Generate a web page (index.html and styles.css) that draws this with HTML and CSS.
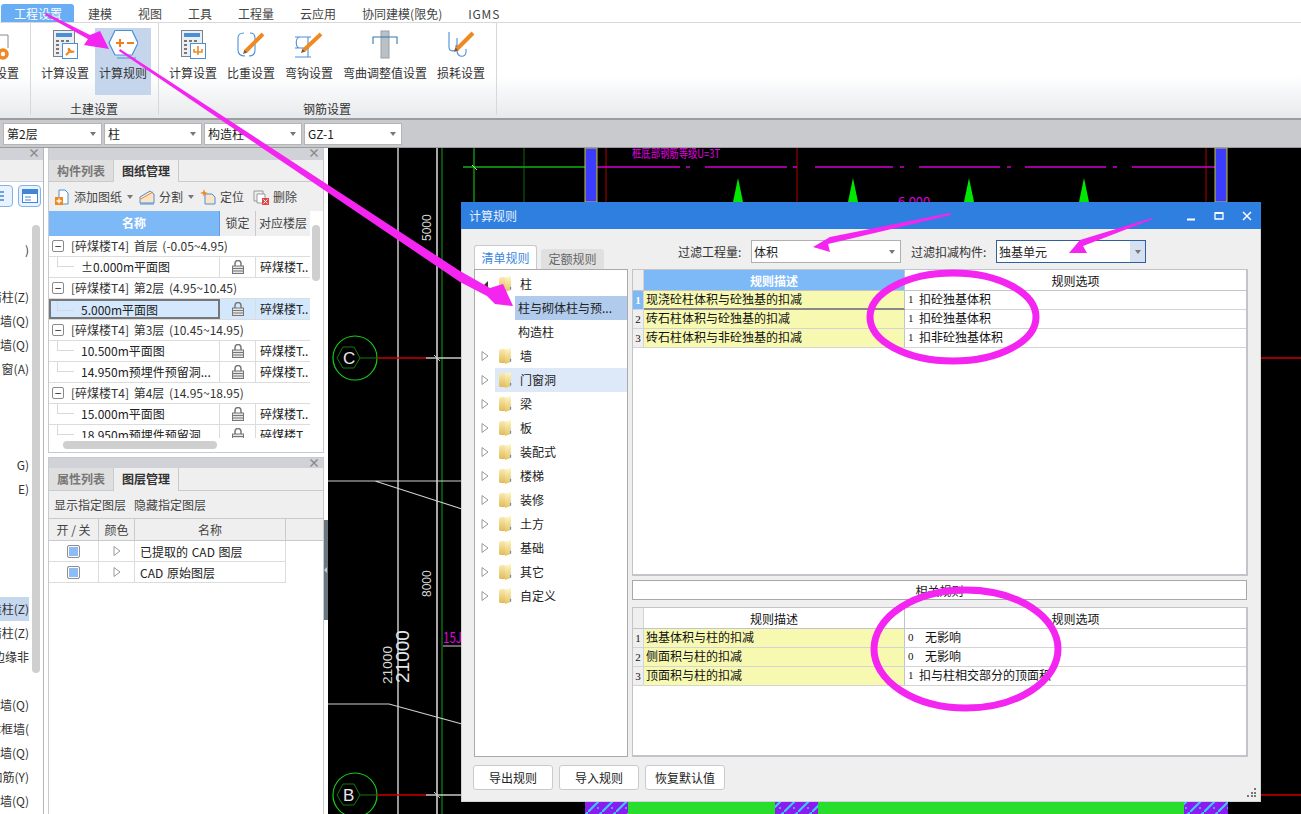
FILE: index.html
```html
<!DOCTYPE html>
<html lang="zh-CN">
<head>
<meta charset="utf-8">
<title>计算规则</title>
<link rel="stylesheet" href="styles.css">
</head>
<body>
<svg class="defs" width="0" height="0" aria-hidden="true">
  <defs>
    <linearGradient id="fold" x1="0" y1="0" x2="0" y2="1"><stop offset="0" stop-color="#fdf7c8"/><stop offset="1" stop-color="#e6c262"/></linearGradient>
    <linearGradient id="fold2" x1="0" y1="0" x2="0" y2="1"><stop offset="0" stop-color="#f9eaac"/><stop offset="1" stop-color="#e2bb5c"/></linearGradient>
    <pattern id="hatch" width="14" height="14" patternUnits="userSpaceOnUse"><rect width="14" height="14" fill="#8a1cf0"/><path d="M0 14L14 0" stroke="#35d0ff" stroke-width="2"/><circle cx="10" cy="10" r="1" fill="#35d0ff"/></pattern>
    <symbol id="calc" viewBox="0 0 30 30">
      <rect x="3.500" y=".5" width="21" height="26" fill="#eceff2" stroke="#7d8288"/>
      <rect x="6" y="3" width="16" height="4" fill="#4a90d9"/>
      <path d="M6 10h3v2H6zM11 10h3v2h-3zM16 10h3v2h-3zM6 14h3v2H6zM6 18h3v2H6zM6 22h3v2H6z" fill="#777"/>
      <rect x="12.500" y="13.500" width="15" height="15" fill="#fff" stroke="#4a90d9"/>
    </symbol>
    <symbol id="lock" viewBox="0 0 12 14">
      <path d="M3 6V3.500a3 3 0 0 1 6 0V6" fill="none" stroke="#777" stroke-width="1.500"/>
      <rect x=".5" y="6" width="11" height="7.500" fill="#e4e4e4" stroke="#777"/>
      <path d="M1 8.500h10M1 11h10" stroke="#777"/>
    </symbol>
    <symbol id="folder" viewBox="0 0 13 16">
      <path d="M0 2.500 1.500 1h4l1 1.500V15H1l-1-1z" fill="url(#fold2)"/>
      <path d="M6 1.500 12 0v14l-6 2z" fill="url(#fold)"/>
      <rect x="11" y="11" width="1.200" height="2.500" fill="#4a90d9"/>
    </symbol>
    <symbol id="tri" viewBox="0 0 8 12"><path d="M1 1.500 7 6 1 10.500z" fill="#fff" stroke="#9a9a9a"/></symbol>
  </defs>
</svg>

<header class="menubar">
  <span class="menu-item is-active">工程设置</span>
  <span class="menu-item">建模</span>
  <span class="menu-item">视图</span>
  <span class="menu-item">工具</span>
  <span class="menu-item">工程量</span>
  <span class="menu-item">云应用</span>
  <span class="menu-item">协同建模(限免)</span>
  <span class="menu-item igms">IGMS</span>
</header>

<section class="ribbon">
  <div class="rib-group rib-first">
    <div class="rib-items">
      <div class="rib-item rib-cut">
        <svg class="rib-icon" viewBox="0 0 30 30"><path d="M20 5h8v13" fill="none" stroke="#8a8a8a"/><circle cx="23" cy="24" r="4" fill="none" stroke="#ef8a22" stroke-width="3.500"/></svg>
        <span class="rib-text">属性设置</span>
      </div>
    </div>
    <div class="rib-label">&nbsp;</div>
  </div>
  <div class="rib-group">
    <div class="rib-items">
      <div class="rib-item">
        <svg class="rib-icon" viewBox="0 0 30 30"><use href="#calc"/><path d="M16 25l5-5" stroke="#ef8a22" stroke-width="2.200"/><path d="M19 18a3 3 0 0 0 5 3" fill="none" stroke="#ef8a22" stroke-width="2.200"/></svg>
        <span class="rib-text">计算设置</span>
      </div>
      <div class="rib-item is-on">
        <svg class="rib-icon" viewBox="0 0 30 30"><path d="M1 13 7 .5h17L30 13l-6 12H7z" fill="#fff" stroke="#4a90d9" stroke-width="1.200"/><path d="M8 13h8M12 9v8M19 13h7" stroke="#ef7f1a" stroke-width="2"/><path d="M9 28h19" stroke="#4a90d9"/></svg>
        <span class="rib-text">计算规则</span>
      </div>
    </div>
    <div class="rib-label">土建设置</div>
  </div>
  <div class="rib-group">
    <div class="rib-items">
      <div class="rib-item">
        <svg class="rib-icon" viewBox="0 0 30 30"><use href="#calc"/><path d="M20 16v9M16 19v3h8v-3" stroke="#ef8a22" stroke-width="1.600" fill="none"/></svg>
        <span class="rib-text">计算设置</span>
      </div>
      <div class="rib-item">
        <svg class="rib-icon" viewBox="0 0 30 30"><path d="M8 3C4 3 2 5 2 8v12c0 4 3 6 7 6M14 3c3 0 5 2 5 5v12c0 4-2 6-6 6" fill="none" stroke="#4a90d9" stroke-width="1.100"/><path d="M10 21 27 4" stroke="#ef8a22" stroke-width="4"/><path d="M7 24l1.500-4.500 3 3z" fill="#8a5a2a"/></svg>
        <span class="rib-text">比重设置</span>
      </div>
      <div class="rib-item">
        <svg class="rib-icon" viewBox="0 0 30 30"><path d="M1 7h16M6 7C1 7 1 18 6 18M1 18h14M1 27h16M14 7v20" fill="none" stroke="#4a90d9" stroke-width="1.100"/><path d="M10 20 27 4" stroke="#ef8a22" stroke-width="4"/><path d="M7 23l1.500-4.500 3 3z" fill="#8a5a2a"/></svg>
        <span class="rib-text">弯钩设置</span>
      </div>
      <div class="rib-item">
        <svg class="rib-icon" viewBox="0 0 30 30"><rect x="11" y="1" width="8" height="27" fill="#b9c0c6" stroke="#9aa1a8"/><path d="M3 14V7h24v7" fill="none" stroke="#2f78b8" stroke-width="1.100"/></svg>
        <span class="rib-text">弯曲调整值设置</span>
      </div>
      <div class="rib-item">
        <svg class="rib-icon" viewBox="0 0 30 30"><path d="M3 2v15c0 5 7 5 7 1v-3M11 8v12c0 8 9 8 9 2v-3" fill="none" stroke="#4a90d9" stroke-width="1.100"/><path d="M11 19 27 3" stroke="#ef8a22" stroke-width="4"/><path d="M8 22l1.500-4.500 3 3z" fill="#8a5a2a"/></svg>
        <span class="rib-text">损耗设置</span>
      </div>
    </div>
    <div class="rib-label">钢筋设置</div>
  </div>
</section>

<nav class="selectbar">
  <div class="select w99"><span>第2层</span><i class="caret"></i></div>
  <div class="select"><span>柱</span><i class="caret"></i></div>
  <div class="select"><span>构造柱</span><i class="caret"></i></div>
  <div class="select"><span>GZ-1</span><i class="caret"></i></div>
</nav>

<main class="workspace">
  <aside class="side-a">
    <div class="pane-head"><span class="pane-x">×</span></div>
    <div class="side-a-tabs"></div>
    <div class="side-a-tools">
      <span class="mini-btn"><svg width="14" height="14" viewBox="0 0 14 14"><path d="M0 3h9M0 7h9M0 11h9" stroke="#3f86d8" stroke-width="1.300"/></svg></span>
      <span class="mini-btn mini-btn-b"><svg width="16" height="14" viewBox="0 0 16 14"><rect x=".5" y=".5" width="15" height="13" fill="#fff" stroke="#3f86d8"/><rect x="1" y="1" width="14" height="4" fill="#3f86d8"/><path d="M3 8h6M3 11h6" stroke="#3f86d8"/></svg></span>
    </div>
    <div class="side-a-list">
      <div class="a-row a-first">)</div>
      <div class="a-row a-gap1">暗柱(Z)</div>
      <div class="a-row">剪力墙(Q)</div>
      <div class="a-row">砌块墙(Q)</div>
      <div class="a-row">窗(A)</div>
      <div class="a-row a-gap3">G)</div>
      <div class="a-row">E)</div>
      <div class="a-row a-gap4 is-sel">构造柱(Z)</div>
      <div class="a-row">暗柱(Z)</div>
      <div class="a-row a-cut-a">约束边缘非阴影</div>
      <div class="a-row a-gap2">砌块墙(Q)</div>
      <div class="a-row a-cut-b">砌体框墙(Q)</div>
      <div class="a-row">砌块墙(Q)</div>
      <div class="a-row">砌体加筋(Y)</div>
      <div class="a-row">砌块墙(Q)</div>
      <span class="vbar vbar-a"></span>
    </div>
  </aside>

  <div class="side-b">
    <section class="pane pane-top">
      <div class="pane-head"><span class="pane-x">×</span></div>
      <div class="tabs"><span class="tab">构件列表</span><span class="tab is-cur">图纸管理</span></div>
      <div class="tools">
        <svg class="t-ico" viewBox="0 0 16 16"><path d="M5 1h6l3 3v11H5z" fill="#fff" stroke="#4a90d9"/><rect x="1" y="8" width="8" height="8" fill="#ef8a22"/><path d="M5 9.500v5M2.500 12h5" stroke="#fff" stroke-width="1.300"/></svg>
        <span class="t-lab">添加图纸</span><i class="caret caret-t"></i>
        <svg class="t-ico t-gap" viewBox="0 0 16 16"><path d="M1 14V8l10-6 4 3v9z" fill="#fbe3c8" stroke="#4a90d9"/><path d="M2 10 14 3" stroke="#ef8a22"/><path d="M1 15h14" stroke="#4a90d9"/></svg>
        <span class="t-lab">分割</span><i class="caret caret-t"></i>
        <svg class="t-ico t-gap" viewBox="0 0 16 16"><path d="M5 5h7l3 3v7H5z" fill="#fbe3c8" stroke="#4a90d9"/><path d="M4 0l1 3 3 1-3 1-1 3-1-3-3-1 3-1z" fill="#ef8a22"/></svg>
        <span class="t-lab">定位</span>
        <svg class="t-ico t-gap2" viewBox="0 0 16 16"><path d="M1 2h9v10H1z" fill="#eee" stroke="#999"/><path d="M4 5h8v9H4z" fill="#fff" stroke="#999"/><rect x="9" y="9" width="7" height="7" fill="#e0474c"/><path d="M10.500 10.500l4 4m0-4l-4 4" stroke="#fff"/></svg>
        <span class="t-lab">删除</span>
      </div>
      <div class="drawings">
        <div class="dg-head">
          <span class="dg-name">名称</span><span class="dg-lock">锁定</span><span class="dg-floor">对应楼层</span>
        </div>
        <div class="dg-group"><span class="box">−</span>[碎煤楼T4] 首层 (-0.05~4.95)</div>
        <div class="dg-row"><span class="dg-c1"><i class="elbow"></i>±0.000m平面图</span><span class="dg-c2"><svg class="lock"><use href="#lock"/></svg></span><span class="dg-c3">碎煤楼T..</span></div>
        <div class="dg-group"><span class="box">−</span>[碎煤楼T4] 第2层 (4.95~10.45)</div>
        <div class="dg-row is-sel"><span class="dg-c1"><i class="elbow"></i>5.000m平面图</span><span class="dg-c2"><svg class="lock"><use href="#lock"/></svg></span><span class="dg-c3">碎煤楼T..</span></div>
        <div class="dg-group"><span class="box">−</span>[碎煤楼T4] 第3层 (10.45~14.95)</div>
        <div class="dg-row"><span class="dg-c1"><i class="elbow"></i>10.500m平面图</span><span class="dg-c2"><svg class="lock"><use href="#lock"/></svg></span><span class="dg-c3">碎煤楼T..</span></div>
        <div class="dg-row"><span class="dg-c1"><i class="elbow"></i>14.950m预埋件预留洞...</span><span class="dg-c2"><svg class="lock"><use href="#lock"/></svg></span><span class="dg-c3">碎煤楼T..</span></div>
        <div class="dg-group"><span class="box">−</span>[碎煤楼T4] 第4层 (14.95~18.95)</div>
        <div class="dg-row"><span class="dg-c1"><i class="elbow"></i>15.000m平面图</span><span class="dg-c2"><svg class="lock"><use href="#lock"/></svg></span><span class="dg-c3">碎煤楼T..</span></div>
        <div class="dg-row"><span class="dg-c1"><i class="elbow"></i>18.950m预埋件预留洞...</span><span class="dg-c2"><svg class="lock"><use href="#lock"/></svg></span><span class="dg-c3">碎煤楼T..</span></div>
        <span class="vbar vbar-b"></span>
        <span class="hfoot"></span>
        <span class="hbar"></span>
      </div>
    </section>

    <section class="pane pane-bottom">
      <div class="pane-head pane-head-s"><span class="pane-x">×</span></div>
      <div class="tabs tabs-l"><span class="tab">属性列表</span><span class="tab is-cur">图层管理</span></div>
      <div class="tools tools-text"><span>显示指定图层</span><span>隐藏指定图层</span></div>
      <div class="layers">
        <div class="ly-row ly-head"><span>开 / 关</span><span>颜色</span><span>名称</span></div>
        <div class="ly-row"><span><i class="check"></i></span><span><svg class="tri"><use href="#tri"/></svg></span><span class="ly-name">已提取的 CAD 图层</span></div>
        <div class="ly-row"><span><i class="check"></i></span><span><svg class="tri"><use href="#tri"/></svg></span><span class="ly-name">CAD 原始图层</span></div>
      </div>
    </section>
  </div>

  <div class="gutter"><i class="gutter-bar"></i></div>

  <div class="cad">
    <svg class="cad-svg" viewBox="328 148 973 666" width="973" height="666">
      <g fill="none" stroke-width="1">
        <path d="M398 148V814" stroke="#c8c8c8" stroke-width="1.500"/>
        <path d="M437 148V814" stroke="#a8a8a8" stroke-width="2"/>
        <path d="M442 148V814" stroke="#12a012"/>
        <path d="M474 148V202" stroke="#0c8f0c" stroke-width="1.500"/>
        <path d="M524 148V202" stroke="#0a6a0a"/>
        <path d="M606 148V202M797 148V202M1206 148V202" stroke="#b00000"/>
        <path d="M463 167H597" stroke="#12b012" stroke-width="1.500"/>
        <path d="M472 165 477 170" stroke="#c8c8c8"/>
        <path d="M597 167H680M686 167H690M705 167H787M793 167H797M815 167H893M900 167H904M919 167H1000M1007 167H1011M1025 167H1106M1113 167H1117M1132 167H1215" stroke="#d000d0" stroke-width="1.500"/>
        <circle cx="355" cy="358" r="22" stroke="#19c819" stroke-width="1.200"/>
        <circle cx="355" cy="795" r="22" stroke="#19c819" stroke-width="1.200"/>
        <path d="M360 358 354 368H343L337 358 343 347H354zM360 795 354 805H343L337 795 343 784H354z" stroke="#0e7a0e"/>
        <path d="M360 358H377M360 795H377" stroke="#0e7a0e"/>
        <path d="M377 358H426M377 795H426" stroke="#c80000" stroke-width="1.500"/>
        <path d="M426 358H462M426 795H462" stroke="#c8c8c8" stroke-width="1.500"/>
        <path d="M434 355 440 361M434 792 440 798" stroke="#c8c8c8"/>
        <path d="M328 481H375L462 509M375 481H462M328 704H389L462 724M443 646H462" stroke="#d0d0d0" stroke-width="1.200"/>
        <path d="M1261 358H1301M1261 795H1301" stroke="#c80000" stroke-width="1.500"/>
      </g>
      <path d="M585 148h12v54h-12zM1215 148h12v54h-12z" fill="#3c3cff" stroke="#c8c820"/>
      <path d="M738 178l5 24h-10zM853 178l5 24h-10zM969 178l5 24h-10zM1084 178l5 24h-10z" fill="#00e800"/>
      <rect x="585" y="802" width="43" height="12" fill="url(#hatch)"/>
      <rect x="628" y="802" width="147" height="12" fill="#28de2c"/>
      <rect x="775" y="802" width="43" height="12" fill="url(#hatch)"/>
      <rect x="818" y="802" width="366" height="12" fill="#28de2c"/>
      <rect x="1184" y="802" width="44" height="12" fill="url(#hatch)"/>
      <text class="cad-t cad-m" x="632" y="158" textLength="88" lengthAdjust="spacingAndGlyphs">桩底部钢筋等级U=3T</text>
      <text class="cad-t cad-m" x="898" y="206" textLength="32" lengthAdjust="spacingAndGlyphs">6.000</text>
      <text class="cad-t cad-w" transform="translate(431 241) rotate(-90)">5000</text>
      <text class="cad-t cad-w" transform="translate(431 597) rotate(-90)">8000</text>
      <text class="cad-big" transform="translate(409 683) rotate(-90)">21000</text>
      <text class="cad-t cad-w" transform="translate(392 684) rotate(-90)" textLength="38" lengthAdjust="spacingAndGlyphs">21000</text>
      <text class="cad-t cad-m cad-j" x="443" y="643" textLength="19" lengthAdjust="spacingAndGlyphs">15J</text>
      <text class="cad-c" x="343" y="364">C</text>
      <text class="cad-c" x="343" y="801">B</text>
    </svg>
  </div>

  <section class="dialog">
    <div class="dlg-title">
      <span>计算规则</span>
      <div class="dlg-ctrls">
        <svg width="12" height="12" viewBox="0 0 12 12"><path d="M2 9.500h8" stroke="#fff" stroke-width="2"/></svg>
        <svg width="12" height="12" viewBox="0 0 12 12"><path d="M2 3h8v6H2z" fill="none" stroke="#fff" stroke-width="1.300"/><path d="M2 3h8" stroke="#fff" stroke-width="2"/></svg>
        <svg width="12" height="12" viewBox="0 0 12 12"><path d="M2 2l8 8m0-8l-8 8" stroke="#fff" stroke-width="1.500"/></svg>
      </div>
    </div>
    <div class="dlg-body">
      <div class="dlg-top">
        <span class="dtab is-cur">清单规则</span>
        <span class="dtab">定额规则</span>
        <div class="filters">
          <label class="f-lab">过滤工程量:</label>
          <div class="combo"><span>体积</span><i class="caret"></i></div>
          <label class="f-lab f-lab2">过滤扣减构件:</label>
          <div class="combo is-focus"><span>独基单元</span><b class="combo-btn"><i class="caret"></i></b></div>
        </div>
      </div>
      <div class="dlg-main">
        <div class="tree">
          <div class="t-row"><svg class="t-arrow" viewBox="0 0 8 8"><path d="M7 1v6H1z" fill="#333"/></svg><svg class="t-folder"><use href="#folder"/></svg><span>柱</span></div>
          <div class="t-row t-leaf is-sel"><span>柱与砌体柱与预...</span></div>
          <div class="t-row t-leaf"><span>构造柱</span></div>
          <div class="t-row"><svg class="t-arrow-o"><use href="#tri"/></svg><svg class="t-folder"><use href="#folder"/></svg><span>墙</span></div>
          <div class="t-row is-hover"><svg class="t-arrow-o"><use href="#tri"/></svg><svg class="t-folder"><use href="#folder"/></svg><span>门窗洞</span></div>
          <div class="t-row"><svg class="t-arrow-o"><use href="#tri"/></svg><svg class="t-folder"><use href="#folder"/></svg><span>梁</span></div>
          <div class="t-row"><svg class="t-arrow-o"><use href="#tri"/></svg><svg class="t-folder"><use href="#folder"/></svg><span>板</span></div>
          <div class="t-row"><svg class="t-arrow-o"><use href="#tri"/></svg><svg class="t-folder"><use href="#folder"/></svg><span>装配式</span></div>
          <div class="t-row"><svg class="t-arrow-o"><use href="#tri"/></svg><svg class="t-folder"><use href="#folder"/></svg><span>楼梯</span></div>
          <div class="t-row"><svg class="t-arrow-o"><use href="#tri"/></svg><svg class="t-folder"><use href="#folder"/></svg><span>装修</span></div>
          <div class="t-row"><svg class="t-arrow-o"><use href="#tri"/></svg><svg class="t-folder"><use href="#folder"/></svg><span>土方</span></div>
          <div class="t-row"><svg class="t-arrow-o"><use href="#tri"/></svg><svg class="t-folder"><use href="#folder"/></svg><span>基础</span></div>
          <div class="t-row"><svg class="t-arrow-o"><use href="#tri"/></svg><svg class="t-folder"><use href="#folder"/></svg><span>其它</span></div>
          <div class="t-row"><svg class="t-arrow-o"><use href="#tri"/></svg><svg class="t-folder"><use href="#folder"/></svg><span>自定义</span></div>
        </div>
        <div class="grids">
          <div class="grid grid-up">
            <div class="g-row g-head"><span class="g-n"></span><span class="g-d is-blue">规则描述</span><span class="g-o">规则选项</span></div>
            <div class="g-row"><span class="g-n is-blue">1</span><span class="g-d is-cur">现浇砼柱体积与砼独基的扣减</span><span class="g-o"><em>1</em>扣砼独基体积</span></div>
            <div class="g-row"><span class="g-n">2</span><span class="g-d">砖石柱体积与砼独基的扣减</span><span class="g-o"><em>1</em>扣砼独基体积</span></div>
            <div class="g-row"><span class="g-n">3</span><span class="g-d">砖石柱体积与非砼独基的扣减</span><span class="g-o"><em>1</em>扣非砼独基体积</span></div>
          </div>
          <div class="split">相关规则</div>
          <div class="grid grid-low">
            <div class="g-row g-head"><span class="g-n"></span><span class="g-d">规则描述</span><span class="g-o">规则选项</span></div>
            <div class="g-row"><span class="g-n">1</span><span class="g-d">独基体积与柱的扣减</span><span class="g-o"><em class="wide">0</em>无影响</span></div>
            <div class="g-row"><span class="g-n">2</span><span class="g-d">侧面积与柱的扣减</span><span class="g-o"><em class="wide">0</em>无影响</span></div>
            <div class="g-row"><span class="g-n">3</span><span class="g-d">顶面积与柱的扣减</span><span class="g-o"><em>1</em>扣与柱相交部分的顶面积</span></div>
          </div>
        </div>
      </div>
      <div class="dlg-foot">
        <button class="btn">导出规则</button>
        <button class="btn">导入规则</button>
        <button class="btn">恢复默认值</button>
      </div>
    </div>
    <svg class="grip" width="10" height="10" viewBox="0 0 10 10"><path d="M7 0h2v2H7zM4 4h2v2H4zM7 4h2v2H7zM0 7h2v2H0zM4 7h2v2H4zM7 7h2v2H7z" fill="#777"/></svg>
  </section>
</main>

<svg class="marks" viewBox="0 0 1301 814" width="1301" height="814" aria-hidden="true">
  <g fill="#f425f0">
    <path d="M46 13 90 35 100 31 109 49 84 45 88 39 45 15z"/>
    <path d="M119 51 120 49 460 271 490 288 503 284 513 306 495 304 487 296 460 282z"/>
    <path d="M950 213 830 237 813 247 830 252 828 244 951 215z"/>
    <path d="M1152 218 1080 240 1069 253 1087 253 1083 246 1153 219z"/>
  </g>
  <g fill="none" stroke="#f425f0" stroke-width="7">
    <ellipse cx="953" cy="317" rx="83" ry="44"/>
    <ellipse cx="966" cy="649" rx="92" ry="59"/>
  </g>
</svg>
</body>
</html>
```

FILE: styles.css
```css
* { box-sizing: border-box; }
html, body { margin: 0; padding: 0; }
body {
  position: relative;
  width: 1301px;
  height: 814px;
  overflow: hidden;
  display: flex;
  flex-direction: column;
  background: #fff;
  color: #222;
  font: 12px/16px "Noto Sans CJK SC", "Liberation Sans", sans-serif;
}
i, em { font-style: normal; }
.defs { position: absolute; }

/* menu */
.menubar {
  height: 23px;
  flex: none;
  display: flex;
  align-items: flex-end;
  padding-left: 1px;
  background: #fff;
  border-bottom: 1px solid #d9d9d9;
  color: #444;
}
.menu-item { height: 18px; line-height: 20px; padding: 0 13px; white-space: nowrap; }
.menu-item.is-active {
  padding: 0 12px 0 13px;
  margin-right: 1px;
  background: #69aef5;
  color: #fff;
  border-radius: 3px 3px 0 0;
}
.igms { letter-spacing: .8px; }

/* ribbon */
.ribbon {
  height: 97px;
  flex: none;
  display: flex;
  background: linear-gradient(#fff 55%, #e7eaec);
  border-bottom: 2px solid #9b9c9e;
}
.rib-group {
  display: flex;
  flex-direction: column;
  padding: 5px 7px 0 6px;
  border-right: 1px solid #d6d8da;
  margin-bottom: 3px;
}
.rib-first { width: 31px; padding: 5px 0 0; overflow: hidden; }
.rib-items { display: flex; gap: 2px; height: 67px; flex: none; }
.rib-item {
  display: flex;
  flex-direction: column;
  align-items: center;
  padding: 2px 4px 0;
  white-space: nowrap;
  color: #333;
}
.rib-item.is-on { background: #c5d6ec; }
.rib-cut { margin-left: -34px; width: 58px; flex: none; }
.rib-icon { width: 30px; height: 30px; flex: none; }
.rib-text { margin-top: 5px; line-height: 16px; }
.rib-label { text-align: center; margin-top: 6px; line-height: 16px; color: #333; }

/* selects */
.selectbar {
  height: 28px;
  flex: none;
  display: flex;
  gap: 2px;
  padding: 3px 0 0 3px;
  background: #c9cacd;
  border-bottom: 1px solid #9b9c9e;
}
.select {
  width: 98px;
  height: 22px;
  display: flex;
  align-items: center;
  justify-content: space-between;
  padding: 0 5px 0 3px;
  background: #fff;
  border: 1px solid #b5b5b5;
}
.w99 { width: 99px; }
.caret {
  width: 0; height: 0;
  border: 3.500px solid transparent;
  border-top: 4px solid #777;
  border-bottom: 0;
  flex: none;
}

/* workspace */
.workspace {
  position: relative;
  flex: 1;
  min-height: 0;
  display: flex;
  background: #fff;
}
.pane-head {
  height: 12px;
  flex: none;
  background: #d1d2d7;
  position: relative;
}
.pane-head-s { height: 10px; }
.pane-x {
  position: absolute;
  right: 3px;
  top: -1px;
  color: #888;
  font-size: 12px;
  line-height: 12px;
  font-weight: 700;
}

/* far-left clipped pane */
.side-a {
  width: 44px;
  flex: none;
  display: flex;
  flex-direction: column;
  border-right: 1px solid #b5b6b9;
}
.side-a-tabs { height: 22px; background: #efefef; border-bottom: 1px solid #d1d2d7; flex: none; }
.side-a-tools { position: relative; height: 43px; flex: none; }
.mini-btn {
  position: absolute;
  top: 3px;
  left: -10px;
  width: 23px;
  height: 22px;
  display: flex;
  align-items: center;
  justify-content: center;
  border: 1px solid #7ab3ef;
  border-radius: 4px;
  background: #eaf3fd;
}
.mini-btn-b { left: 18px; }
.side-a-list { position: relative; flex: 1; }
.a-row {
  width: 29px;
  height: 24px;
  line-height: 24px;
  display: flex;
  justify-content: flex-end;
  white-space: nowrap;
  overflow: hidden;
  color: #333;
}
.a-first { margin-top: 13px; }
.a-gap1 { margin-top: 23px; }
.a-gap2 { margin-top: 24px; }
.a-gap3 { margin-top: 72px; }
.a-gap4 { margin-top: 96px; }
.a-row.is-sel { background: #c6d8ef; }
.a-cut-a { justify-content: flex-start; text-indent: -31px; }
.a-cut-b { justify-content: flex-start; text-indent: -23px; }
.vbar { position: absolute; background: #cfcfcf; border-radius: 4px; width: 8px; }
.vbar-a { right: 3px; top: 0; height: 448px; }

/* middle column */
.side-b { width: 276px; flex: none; margin-left: 4px; display: flex; flex-direction: column; }
.pane {
  display: flex;
  flex-direction: column;
  border: solid #c9cacd;
  border-width: 0 1px;
}
.pane-top { height: 305px; border-bottom-width: 1px; }
.pane-bottom { flex: 1; margin-top: 4px; border-top: 1px solid #c9cacd; }
.tabs {
  height: 22px;
  flex: none;
  display: flex;
  background: #efefef;
  border-bottom: 1px solid #c9cacd;
}
.tabs-l { height: 23px; }
.tab {
  width: 64px;
  text-align: center;
  line-height: 22px;
  background: #dfdfdf;
  color: #777;
  font-weight: 700;
}
.tab.is-cur { background: #efefef; color: #333; border: solid #c9cacd; border-width: 0 1px 0 1px; margin-bottom: -1px; width: 66px; }
.tools {
  height: 29px;
  flex: none;
  display: flex;
  align-items: center;
  padding-left: 5px;
  background: #efefef;
  color: #444;
}
.t-ico { width: 16px; height: 16px; flex: none; }
.t-lab { margin-left: 4px; margin-right: 5px; white-space: nowrap; }
.t-gap { margin-left: 6px; }
.t-gap2 { margin-left: 4px; }
.tools-text { height: 28px; gap: 8px; padding-left: 5px; border-bottom: 1px solid #c9cacd; }

.drawings { position: relative; flex: 1; overflow: hidden; background: #fff; }
.dg-head { display: flex; height: 25px; line-height: 24px; text-align: center; width: 261px; background: #efefef; color: #444; }
.dg-name { width: 171px; background: #7db8f7; color: #fff; font-weight: 700; border-right: 1px solid #5d9ee6; }
.dg-lock { width: 36px; border-right: 1px solid #c9cacd; }
.dg-floor { width: 54px; white-space: nowrap; }
.dg-group {
  width: 261px;
  height: 21px;
  line-height: 20px;
  display: flex;
  align-items: center;
  white-space: pre;
  word-spacing: 2px;
  padding-left: 3px;
  border-bottom: 1px solid #dcdcdc;
  color: #333;
}
.box {
  width: 12px;
  height: 12px;
  flex: none;
  margin-right: 7px;
  border: 1px solid #8a8a8a;
  border-radius: 2px;
  line-height: 9px;
  text-align: center;
  color: #333;
}
.dg-row { display: flex; width: 261px; height: 21px; line-height: 20px; border-bottom: 1px solid #dcdcdc; color: #222; }
.dg-c1 { position: relative; width: 171px; padding-left: 32px; border-right: 1px solid #dcdcdc; white-space: nowrap; overflow: hidden; }
.dg-c2 { width: 36px; display: flex; align-items: center; justify-content: center; border-right: 1px solid #dcdcdc; }
.dg-c3 { width: 54px; padding-left: 4px; white-space: nowrap; overflow: hidden; }
.elbow {
  position: absolute;
  left: 8px;
  top: 0;
  width: 17px;
  height: 10px;
  border: solid #d9d9d9;
  border-width: 0 0 1px 1px;
}
.lock { width: 12px; height: 14px; }
.dg-row.is-sel { background: #d4e8fd; }
.dg-row.is-sel .dg-c1 { border: 2px solid #777; padding-left: 30px; line-height: 18px; }
.dg-row.is-sel .elbow { left: 6px; }
.vbar-b { right: 3px; top: 14px; height: 56px; }
.hfoot { position: absolute; left: 0; right: 0; bottom: 0; height: 14px; background: #fff; }
.hbar { position: absolute; left: 14px; bottom: 3px; width: 154px; height: 8px; background: #cfcfcf; border-radius: 4px; }

.layers { flex: 1; background: #fff; }
.ly-row { display: flex; width: 237px; height: 21px; line-height: 21px; text-align: center; border-bottom: 1px solid #dcdcdc; color: #222; }
.ly-row > span { width: 50px; border-right: 1px solid #dcdcdc; display: flex; align-items: center; justify-content: center; }
.ly-row > span:nth-child(2) { width: 36px; }
.ly-row > span:nth-child(3) { width: 151px; }
.ly-row > .ly-name { justify-content: flex-start; padding-left: 5px; white-space: pre; word-spacing: 1px; }
.ly-head { width: 100%; height: 22px; background: #efefef; color: #444; border-color: #c9cacd; }
.ly-head > span { border-color: #c9cacd; }
.check { width: 13px; height: 13px; border: 1px solid #8f8f8f; border-radius: 2px; background: #8cbcf8; box-shadow: inset 0 0 0 1px #fff; }
.tri { width: 8px; height: 12px; }

.gutter { width: 4px; flex: none; position: relative; background: #fff; }
.gutter-bar { position: absolute; left: 0; top: 372px; width: 4px; height: 100px; background: #6b7680; }
.gutter-bar::after {
  content: "";
  position: absolute;
  left: 0;
  top: 47px;
  border: 3px solid transparent;
  border-left: 0;
  border-right: 3px solid #c9cacd;
}

/* cad canvas */
.cad { flex: 1; min-width: 0; background: #000; border-top: 1px solid #9b9c9e; margin-top: -1px; overflow: hidden; }
.cad-svg { display: block; }
.cad-t { font: 12px "Liberation Sans", sans-serif; }
.cad-w { fill: #d8d8d8; }
.cad-m { fill: #e000e0; font-family: "Noto Sans CJK SC", sans-serif; }
.cad-j { font-size: 15px; }
.cad-big { font: 19px "Liberation Sans", sans-serif; fill: #e6e6e6; }
.cad-c { font: 17px "Liberation Sans", sans-serif; fill: #e8e8e8; }

/* dialog window */
.dialog {
  position: absolute;
  left: 461px;
  top: 54px;
  width: 800px;
  height: 600px;
  display: flex;
  flex-direction: column;
  background: #efefef;
  border: solid #cfd3d8;
  border-width: 0 1px 1px;
}
.dlg-title {
  height: 27px;
  flex: none;
  display: flex;
  align-items: center;
  justify-content: space-between;
  padding: 0 8px 0 8px;
  margin: 0 -1px;
  background: #2e7fe0;
  color: #e8f2fd;
}
.dlg-ctrls { display: flex; gap: 16px; }
.dlg-body { flex: 1; display: flex; flex-direction: column; padding: 0 12px 0 12px; min-height: 0; }
.dlg-top { height: 40px; flex: none; display: flex; align-items: flex-end; gap: 4px; }
.dtab {
  width: 63px;
  text-align: center;
  background: #e0e0e0;
  color: #666;
  height: 20px;
  line-height: 19px;
  border-radius: 3px 3px 0 0;
}
.dtab.is-cur { height: 24px; line-height: 23px; background: #fff; color: #3a86dc; border: 1px solid #c9cacd; border-bottom: 0; }
.filters { display: flex; align-items: center; align-self: flex-start; margin-top: 11px; margin-left: 70px; }
.f-lab { width: 73px; color: #333; white-space: nowrap; }
.f-lab2 { width: 85px; margin-left: 10px; }
.combo {
  width: 150px;
  height: 23px;
  display: flex;
  align-items: center;
  justify-content: space-between;
  padding: 0 5px 0 2px;
  background: #fff;
  border: 1px solid #b0b0b0;
}
.combo.is-focus { border-color: #2f5f9f; padding-right: 0; }
.combo-btn { width: 15px; height: 100%; display: flex; align-items: center; justify-content: center; background: #d5e1f1; }

.dlg-main { height: 488px; flex: none; display: flex; gap: 4px; }
.tree { width: 154px; flex: none; background: #fff; border: 1px solid #aaa; padding-top: 2px; }
.t-row { height: 24px; display: flex; align-items: center; padding-left: 6px; }
.t-row.is-hover { background: #dde8f8; margin-left: 20px; padding-left: 0; }
.t-row.is-hover .t-arrow-o { margin-left: -14px; margin-right: 6px; }
.t-arrow { width: 8px; height: 8px; flex: none; margin-right: 6px; }
.t-arrow-o { width: 8px; height: 12px; flex: none; margin-right: 6px; }
.t-folder { width: 13px; height: 16px; flex: none; margin-right: 8px; margin-left: 4px; }
.t-leaf { margin-left: 40px; padding-left: 3px; }
.t-leaf.is-sel { background: #b1cbec; }

.grids { width: 616px; flex: none; display: flex; flex-direction: column; }
.grid { background: #fff; border: solid #c3c4c9; border-width: 1px 2px 2px 1px; }
.grid-up { height: 308px; }
.grid-low { height: 150px; margin-top: 7px; }
.split {
  height: 20px;
  margin-top: 4px;
  margin-right: 1px;
  text-align: center;
  line-height: 20px;
  background: #fff;
  border: 1px solid #a8a8a8;
}
.g-row { display: flex; height: 19px; line-height: 16px; border-bottom: 1px solid #d4d4d4; color: #111; white-space: nowrap; }
.g-head { height: 21px; line-height: 21px; border-bottom-color: #c3c4c9; }
.g-n { width: 11px; flex: none; text-align: center; background: #efefef; border-right: 1px solid #d4d4d4; font-family: "Liberation Serif", serif; font-size: 11px; line-height: 19px; }
.g-n.is-blue { background: #7db8f7; color: #fff; font-weight: 700; }
.g-d { width: 261px; flex: none; padding-left: 2px; background: #f7f9b1; border-right: 1px solid #c3c4c9; }
.g-o { flex: 1; padding-left: 3px; display: flex; }
.g-o em { width: 11px; font-family: "Liberation Serif", serif; font-size: 11px; flex: none; }
.g-o em.wide { width: 17px; }
.g-head .g-d { background: #fff; padding: 0; text-align: center; }
.g-head .g-d.is-blue { background: #7db8f7; color: #fff; font-weight: 700; }
.g-head .g-o { justify-content: center; padding: 0; }
.g-d.is-cur { border-bottom: 2px solid #888; height: 19px; }

.dlg-foot { display: flex; gap: 6px; margin: 8px 0 0 -1px; }
.btn {
  width: 80px;
  height: 25px;
  padding: 0;
  background: #fff;
  border: 1px solid #c9cacd;
  border-radius: 3px;
  color: #222;
  font: inherit;
}
.grip { position: absolute; right: 3px; bottom: 3px; }

/* hand-drawn annotation layer */
.marks { position: absolute; left: 0; top: 0; pointer-events: none; }
```
